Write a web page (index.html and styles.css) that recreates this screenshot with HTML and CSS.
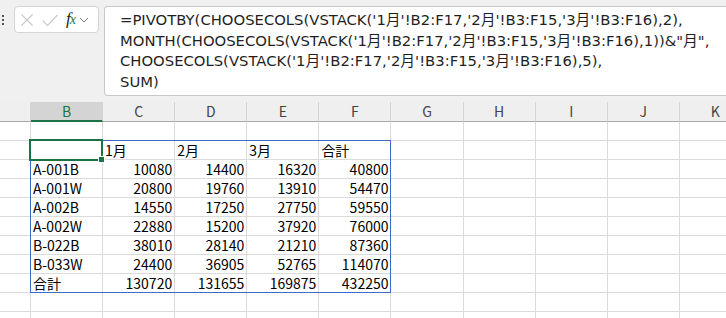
FILE: index.html
```html
<!DOCTYPE html>
<html lang="ja">
  <head>
    <meta charset="UTF-8" />
    <title>PIVOTBY</title>
    <link rel="stylesheet" href="styles.css">
  </head>
  <body>
    <div class="formula-bar">
      <div class="grip">
        <svg width="14" height="14" viewBox="0 0 14 14">
          <rect x="2" y="2" width="2" height="2" fill="#555" />
          <rect x="2" y="6" width="2" height="2" fill="#555" />
          <rect x="2" y="10" width="2" height="2" fill="#555" />
        </svg>
      </div>
      <div class="fx-box">
        <svg class="ico" width="16" height="16" viewBox="0 0 16 16">
          <path d="M2.5 2.5 L13.5 13.5 M13.5 2.5 L2.5 13.5" stroke="#c8c8c8" stroke-width="1.1" fill="none" />
        </svg>
        <svg class="ico" width="18" height="16" viewBox="0 0 18 16">
          <path d="M1.5 8.5 L6.5 13.5 L16.5 3" stroke="#c8c8c8" stroke-width="1.1" fill="none" />
        </svg>
        <span class="fx"><i class="f">f</i><i class="x">x</i></span>
        <svg class="chev" width="10" height="8" viewBox="0 0 10 8">
          <path d="M1 2 L5 6 L9 2" stroke="#777" stroke-width="1" fill="none" />
        </svg>
      </div>
      <div class="formula">=PIVOTBY(CHOOSECOLS(VSTACK('1月'!B2:F17,'2月'!B3:F15,'3月'!B3:F16),2),
MONTH(CHOOSECOLS(VSTACK('1月'!B2:F17,'2月'!B3:F15,'3月'!B3:F16),1))&amp;"月",
CHOOSECOLS(VSTACK('1月'!B2:F17,'2月'!B3:F15,'3月'!B3:F16),5),
SUM)</div>
    </div>

    <div class="sheet">
      <div class="row head">
        <div class="c"></div><div class="c sel">B</div><div class="c">C</div><div class="c">D</div><div class="c">E</div><div class="c">F</div><div class="c">G</div><div class="c">H</div><div class="c">I</div><div class="c">J</div><div class="c">K</div>
      </div>
      <div class="row">
        <div class="c"></div><div class="c"></div><div class="c"></div><div class="c"></div><div class="c"></div><div class="c"></div><div class="c"></div><div class="c"></div><div class="c"></div><div class="c"></div><div class="c"></div>
      </div>
      <div class="row">
        <div class="c"></div><div class="c"></div><div class="c">1月</div><div class="c">2月</div><div class="c">3月</div><div class="c">合計</div><div class="c"></div><div class="c"></div><div class="c"></div><div class="c"></div><div class="c"></div>
      </div>
      <div class="row">
        <div class="c"></div><div class="c">A-001B</div><div class="c n">10080</div><div class="c n">14400</div><div class="c n">16320</div><div class="c n">40800</div><div class="c"></div><div class="c"></div><div class="c"></div><div class="c"></div><div class="c"></div>
      </div>
      <div class="row">
        <div class="c"></div><div class="c">A-001W</div><div class="c n">20800</div><div class="c n">19760</div><div class="c n">13910</div><div class="c n">54470</div><div class="c"></div><div class="c"></div><div class="c"></div><div class="c"></div><div class="c"></div>
      </div>
      <div class="row">
        <div class="c"></div><div class="c">A-002B</div><div class="c n">14550</div><div class="c n">17250</div><div class="c n">27750</div><div class="c n">59550</div><div class="c"></div><div class="c"></div><div class="c"></div><div class="c"></div><div class="c"></div>
      </div>
      <div class="row">
        <div class="c"></div><div class="c">A-002W</div><div class="c n">22880</div><div class="c n">15200</div><div class="c n">37920</div><div class="c n">76000</div><div class="c"></div><div class="c"></div><div class="c"></div><div class="c"></div><div class="c"></div>
      </div>
      <div class="row">
        <div class="c"></div><div class="c">B-022B</div><div class="c n">38010</div><div class="c n">28140</div><div class="c n">21210</div><div class="c n">87360</div><div class="c"></div><div class="c"></div><div class="c"></div><div class="c"></div><div class="c"></div>
      </div>
      <div class="row">
        <div class="c"></div><div class="c">B-033W</div><div class="c n">24400</div><div class="c n">36905</div><div class="c n">52765</div><div class="c n">114070</div><div class="c"></div><div class="c"></div><div class="c"></div><div class="c"></div><div class="c"></div>
      </div>
      <div class="row">
        <div class="c"></div><div class="c">合計</div><div class="c n">130720</div><div class="c n">131655</div><div class="c n">169875</div><div class="c n">432250</div><div class="c"></div><div class="c"></div><div class="c"></div><div class="c"></div><div class="c"></div>
      </div>
      <div class="row">
        <div class="c"></div><div class="c"></div><div class="c"></div><div class="c"></div><div class="c"></div><div class="c"></div><div class="c"></div><div class="c"></div><div class="c"></div><div class="c"></div><div class="c"></div>
      </div>
      <div class="row">
        <div class="c"></div><div class="c"></div><div class="c"></div><div class="c"></div><div class="c"></div><div class="c"></div><div class="c"></div><div class="c"></div><div class="c"></div><div class="c"></div><div class="c"></div>
      </div>

      <!-- spill range and active cell -->
      <div class="range"></div>
      <div class="cursor"><div class="handle"></div></div>
    </div>
  </body>
</html>
```

FILE: styles.css
```css
* {
  box-sizing: border-box;
}
body {
  margin: 0;
  width: 726px;
  height: 318px;
  overflow: hidden;
  background: #fff;
  color: #000;
  font-family: "Noto Sans CJK JP", "Noto Sans", sans-serif;
}

/* formula bar */
.formula-bar {
  height: 102px;
  background: #f0f0f0;
  display: flex;
  align-items: flex-start;
  padding-top: 6px;
}
.grip {
  width: 14px;
  padding-top: 7px;
}
.grip svg {
  display: block;
}
.fx-box {
  width: 85px;
  height: 27px;
  border: 1px solid #d4d4d4;
  border-radius: 4px;
  background: #fff;
  display: flex;
  align-items: center;
  padding-left: 4px;
}
.fx-box .ico {
  margin-right: 6px;
}
.fx {
  font-family: "Liberation Serif", serif;
  font-size: 17px;
  line-height: 20px;
  margin-left: 1px;
}
.fx .f {
  color: #222;
}
.fx .x {
  color: #1e7145;
  font-size: 14px;
  margin-left: -1px;
}
.chev {
  margin-left: 3px;
}
.formula {
  flex: 1;
  margin-left: 5px;
  height: 90px;
  border: 1px solid #c8c8c8;
  border-right: none;
  border-radius: 4px 0 0 4px;
  background: #fff;
  padding: 3px 0 0 15px;
  font-family: "DejaVu Sans", "Noto Sans CJK JP", sans-serif;
  font-size: 14.8px;
  line-height: 20.6px;
  white-space: pre;
  overflow: hidden;
  color: #1f1f1f;
}

/* sheet grid */
.sheet {
  position: relative;
}
.row {
  display: grid;
  grid-template-columns: 31px repeat(10, 72.1px);
  height: 19px;
}
.c {
  border-right: 1px solid #dadada;
  border-bottom: 1px solid #dadada;
  padding: 0 2px;
  font-size: 14px;
  line-height: 18px;
  white-space: nowrap;
  overflow: hidden;
}
.n {
  text-align: right;
}
.head {
  height: 20px;
  background: #efefef;
}
.head .c {
  border-right-color: #d4d4d4;
  border-bottom-color: #a8a8a8;
  text-align: center;
  color: #444;
  line-height: 19px;
}
.head .sel {
  background: #d4d4d4;
  color: #1e7145;
  border-bottom: 2px solid #1e7145;
  line-height: 18px;
}

.range {
  position: absolute;
  left: 30px;
  top: 38px;
  width: 361px;
  height: 153px;
  border: 1px solid #3a6cc8;
}
.cursor {
  position: absolute;
  left: 29px;
  top: 37px;
  width: 74px;
  height: 22px;
  border: 2px solid #1e7145;
}
.handle {
  position: absolute;
  right: -4px;
  bottom: -4px;
  width: 7px;
  height: 7px;
  background: #1e7145;
  border: 1px solid #fff;
}
```
